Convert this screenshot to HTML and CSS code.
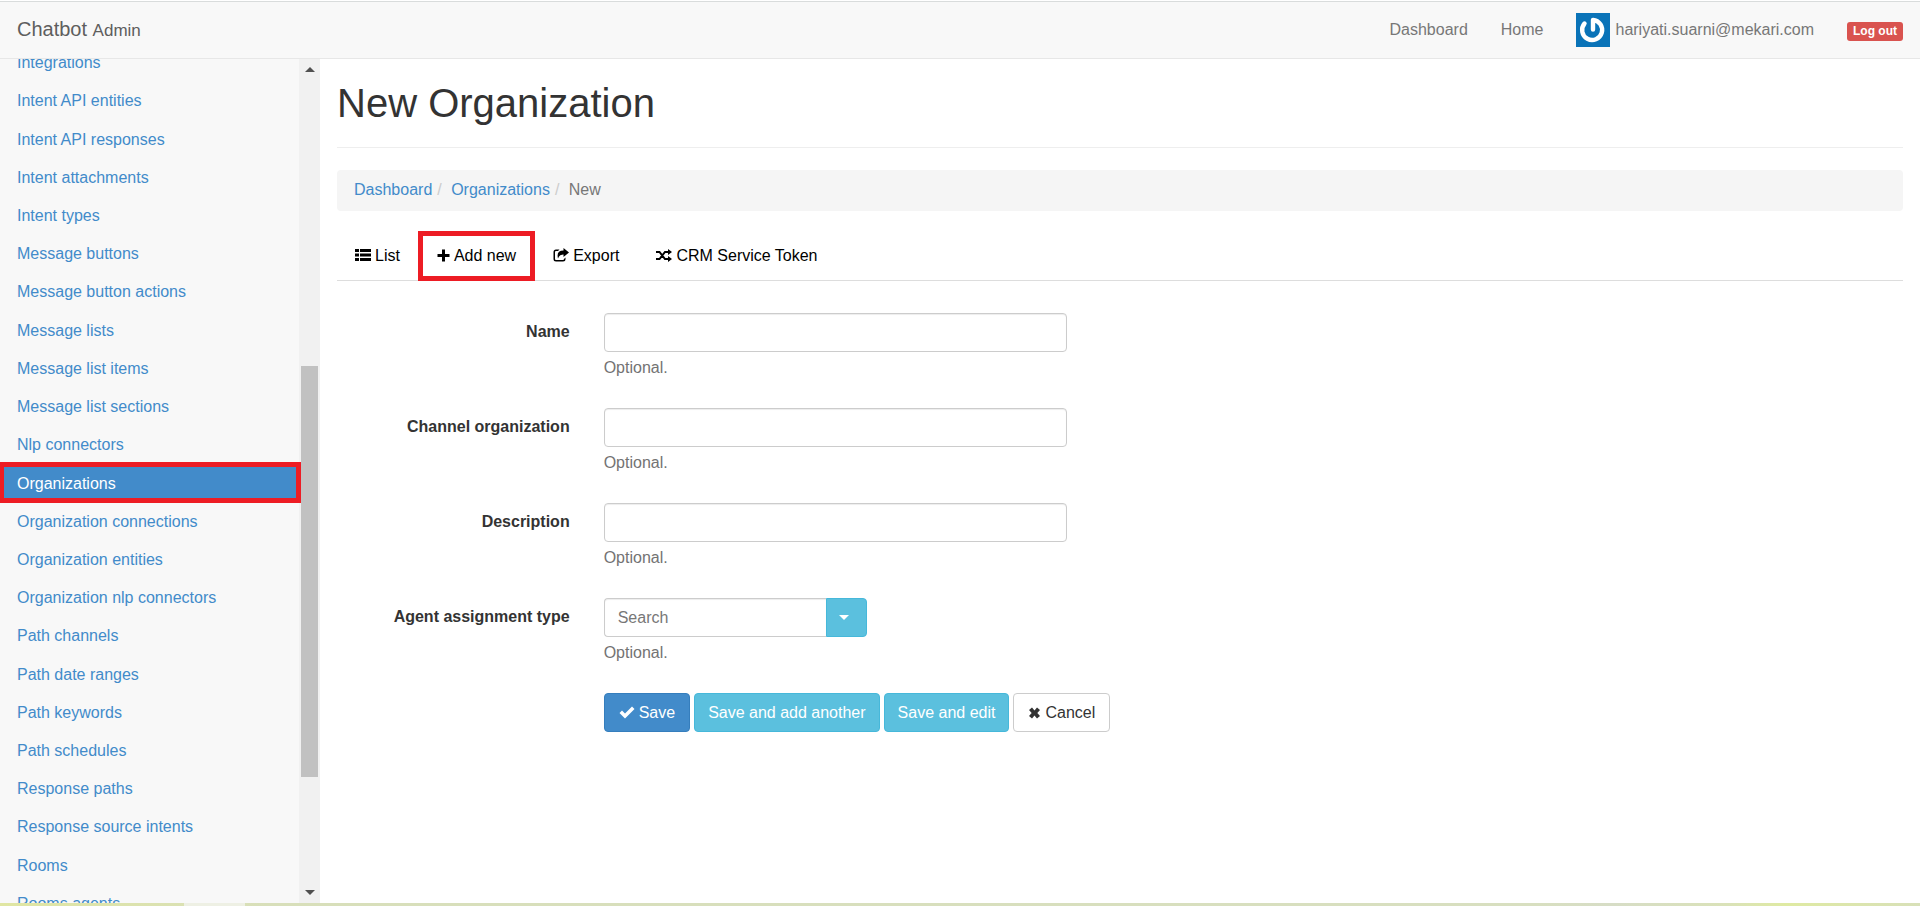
FILE: index.html
```html
<!DOCTYPE html>
<html lang="en">
<head>
<meta charset="utf-8">
<title>New Organization | Chatbot Admin</title>
<link rel="stylesheet" href="styles.css">
</head>
<body>
<header class="navbar">
  <a class="brand" href="#">Chatbot <small>Admin</small></a>
  <nav class="nav-links">
    <a href="#">Dashboard</a>
    <a href="#">Home</a>
    <a class="user" href="#">
      <svg class="avatar" viewBox="0 0 34 34" aria-hidden="true"><rect width="34" height="34" fill="#0a73b8"/><path d="M8.500 10.500A10 10 0 1 0 17 7v9.500" fill="none" stroke="#fff" stroke-width="4.400" stroke-linecap="round" stroke-linejoin="round"/></svg>
      <span>hariyati.suarni@mekari.com</span>
    </a>
    <a href="#"><span class="badge">Log out</span></a>
  </nav>
</header>
<div class="page">
  <aside class="sidebar">
    <ul class="menu">
      <li><a href="#">Integrations</a></li>
      <li><a href="#">Intent API entities</a></li>
      <li><a href="#">Intent API responses</a></li>
      <li><a href="#">Intent attachments</a></li>
      <li><a href="#">Intent types</a></li>
      <li><a href="#">Message buttons</a></li>
      <li><a href="#">Message button actions</a></li>
      <li><a href="#">Message lists</a></li>
      <li><a href="#">Message list items</a></li>
      <li><a href="#">Message list sections</a></li>
      <li><a href="#">Nlp connectors</a></li>
      <li class="active"><a href="#">Organizations</a></li>
      <li><a href="#">Organization connections</a></li>
      <li><a href="#">Organization entities</a></li>
      <li><a href="#">Organization nlp connectors</a></li>
      <li><a href="#">Path channels</a></li>
      <li><a href="#">Path date ranges</a></li>
      <li><a href="#">Path keywords</a></li>
      <li><a href="#">Path schedules</a></li>
      <li><a href="#">Response paths</a></li>
      <li><a href="#">Response source intents</a></li>
      <li><a href="#">Rooms</a></li>
      <li><a href="#">Rooms agents</a></li>
    </ul>
    <div class="scrollbar" aria-hidden="true">
      <span class="arrow arrow-up"></span>
      <span class="track"><span class="thumb"></span></span>
      <span class="arrow arrow-down"></span>
    </div>
  </aside>
  <main class="content">
    <h1>New Organization</h1>
    <ol class="breadcrumb">
      <li><a href="#">Dashboard</a></li><li><a href="#">Organizations</a></li><li class="current">New</li>
    </ol>
    <nav class="tabs">
      <a href="#"><svg class="icon" viewBox="0 0 16 16"><path d="M0 1h4v3H0zM5 1h11v3H5zM0 5.500h4v3H0zM5 5.500h11v3H5zM0 10h4v3H0zM5 10h11v3H5z"/></svg>List</a>
      <a class="marked" href="#"><svg class="icon icon-narrow" viewBox="0 0 13 16"><path d="M5 1.500h3v4.500h4.500v3H8v4.500H5V9H.5V6H5z"/></svg>Add new</a>
      <a href="#"><svg class="icon" viewBox="0 0 16 16"><path d="M6.500 1.500H3Q.5 1.500 .5 4v7Q.5 13.500 3 13.500h7q2.500 0 2.500-2.500V9.500L11 11q0 1-1 1H3q-1 0-1-1V4q0-1 1-1h2z"/><path d="M10.500 0L16 4.500 10.500 9V6.500Q6.500 6.300 5 10.500 3 2.600 10.500 2.600z"/></svg>Export</a>
      <a href="#"><svg class="icon" viewBox="0 0 16 16"><path d="M0 4h3.500L9 11h4M0 11h3.500L9 4h4" fill="none" stroke="currentColor" stroke-width="2"/><path d="M12 1l4 3-4 3zM12 8l4 3-4 3z"/></svg>CRM Service Token</a>
    </nav>
    <form class="form">
      <div class="row">
        <label for="name">Name</label>
        <div class="field"><input class="control" id="name" type="text"><p class="help">Optional.</p></div>
      </div>
      <div class="row">
        <label for="channel">Channel organization</label>
        <div class="field"><input class="control" id="channel" type="text"><p class="help">Optional.</p></div>
      </div>
      <div class="row">
        <label for="description">Description</label>
        <div class="field"><input class="control" id="description" type="text"><p class="help">Optional.</p></div>
      </div>
      <div class="row">
        <label for="agent">Agent assignment type</label>
        <div class="field">
          <div class="combo"><input class="control" id="agent" type="text" placeholder="Search"><button class="btn btn-info toggle" type="button" aria-label="Show options"><span class="caret"></span></button></div>
          <p class="help">Optional.</p>
        </div>
      </div>
      <div class="row">
        <div class="actions">
          <button class="btn btn-primary" type="submit"><svg class="icon" viewBox="0 0 16 16"><path d="M.5 8L3 5.500l3 3 7-7L15.500 4 6 13.500z"/></svg>Save</button>
          <button class="btn btn-info" type="submit">Save and add another</button>
          <button class="btn btn-info" type="submit">Save and edit</button>
          <button class="btn btn-default" type="button"><svg class="icon icon-narrow" viewBox="0 0 13 16"><path d="M4 2.500l2.500 3 2.500-3L12 5 9.300 8l2.700 3-3 2.500-2.500-3-2.500 3L1 11l2.700-3L1 5z"/></svg>Cancel</button>
        </div>
      </div>
    </form>
  </main>
</div>
<div class="strip"></div>
</body>
</html>
```

FILE: styles.css
```css
* { box-sizing: border-box; }
body {
  margin: 0;
  height: 100vh;
  display: flex;
  flex-direction: column;
  overflow: hidden;
  background: #fff;
  color: #333;
  font: 16px/22px "Liberation Sans", Arial, sans-serif;
}
a { color: #428bca; text-decoration: none; }
ul, ol { margin: 0; padding: 0; list-style: none; }

/* Top bar */
.navbar {
  flex: none;
  display: flex;
  justify-content: space-between;
  align-items: center;
  margin-top: 1px;
  height: 58px;
  padding: 0 17px;
  background: #f8f8f8;
  border-top: 1px solid #d9dcdc;
  border-bottom: 1px solid #e7e7e7;
}
.brand { color: #5e5e5e; font-size: 20px; }
.brand small { font-size: 17px; }
.nav-links { display: flex; align-items: center; gap: 33px; }
.nav-links a { color: #777; }
.user { display: flex; align-items: center; gap: 5px; }
.avatar { width: 34px; height: 34px; }
.badge {
  display: block;
  margin-top: 3px;
  padding: 0 6px;
  border-radius: 3px;
  background: #d9534f;
  color: #fff;
  font-size: 12px;
  font-weight: bold;
  line-height: 19px;
}

/* Page body */
.page { flex: 1; min-height: 0; display: flex; }
.strip {
  flex: none;
  height: 3px;
  background:
    linear-gradient(#eef0e4, #eef0e4) 184px 0 / 61px 3px no-repeat,
    linear-gradient(90deg, #e0e6a2, #d8dfba 14%, #d8dfc0 80%, #d7ddc6 84%, #dae2b8 90%, #dfeaa2 93%, #d8e0b8);
}

/* Sidebar */
.sidebar { flex: none; width: 320px; display: flex; overflow: hidden; background: #f8f8f8; }
.menu { flex: 1; display: flex; flex-direction: column; margin: -15px 0 -20px; }
.menu li { position: relative; flex: 1 0 auto; display: flex; }
.menu a { flex: 1; display: flex; align-items: center; padding: 0 17px; }
.menu .active a { background: #428bca; color: #fff; }
.menu .active::after {
  content: "";
  position: absolute;
  z-index: 1;
  inset: -2px -2px 0 0;
  border: 5px solid #ed1c24;
  border-left-width: 4px;
}
.scrollbar { width: 21px; display: flex; flex-direction: column; align-items: center; padding: 8px 0; background: #f1f1f1; }
.arrow { border: 5px solid transparent; }
.arrow-up { border-top: 0; border-bottom-color: #505050; }
.arrow-down { border-bottom: 0; border-top-color: #505050; }
.track { flex: 1; display: flex; flex-direction: column; padding-top: 294px; }
.thumb { width: 17px; height: 50vh; max-height: 411px; background: #c1c1c1; }

/* Content */
.content { flex: 1; min-width: 0; padding: 22px 17px 0; }
h1 {
  margin: 0 0 22px;
  padding-bottom: 22px;
  border-bottom: 1px solid #eee;
  font-size: 40px;
  font-weight: normal;
  line-height: 44px;
}
.breadcrumb { display: flex; margin-bottom: 19px; padding: 9px 17px 10px; border-radius: 4px; background: #f5f5f5; }
.breadcrumb li + li::before { content: "/\00a0"; padding: 0 5px; color: #ccc; }
.current { color: #777; }
.tabs { display: flex; gap: 1px; border-bottom: 1px solid #ddd; }
.tabs a { position: relative; display: flex; align-items: center; gap: 4px; padding: 15px 18px 13px; color: #000; }
.marked::after { content: "";  position: absolute; inset: 1px -1px -1px; border: 5px solid #ed1c24; }
.icon { flex: none; width: 16px; height: 16px; fill: currentColor; }
.icon-narrow { width: 13px; }

/* Form */
.form { margin: 32px -17px 0; }
.row { display: grid; grid-template-columns: 1fr 5fr; min-height: 95px; }
.row label { padding: 8px 17px 0; text-align: right; font-weight: bold; }
.field { padding: 0 17px; }
.control {
  display: block;
  width: 463px;
  max-width: 100%;
  height: 39px;
  padding: 6px 13px;
  border: 1px solid #ccc;
  border-radius: 4px;
  background: #fff;
  box-shadow: inset 0 1px 1px rgba(0, 0, 0, .075);
  color: #555;
  font: inherit;
}
.control::placeholder { color: #777; opacity: 1; }
.help { margin: 5px 0 0; color: #737373; }
.actions { grid-column: 2; display: flex; align-items: flex-start; gap: 4px; padding: 0 17px; }
.btn {
  display: flex;
  align-items: center;
  gap: 4px;
  height: 39px;
  padding: 0 13px;
  border: 1px solid;
  border-radius: 4px;
  font: inherit;
}
.btn-primary { padding: 0 14px; background: #428bca; border-color: #357ebd; color: #fff; }
.btn-info { background: #5bc0de; border-color: #46b8da; color: #fff; }
.btn-default { padding: 0 14px; background: #fff; border-color: #ccc; color: #333; }
.combo { display: flex; width: 263px; }
.combo .control { flex: 1; min-width: 0; border-right: 0; border-radius: 4px 0 0 4px; }
.combo .toggle { padding: 0 17px 0 12px; border-radius: 0 4px 4px 0; }
.caret { border: 5px solid transparent; border-top-color: #fff; border-bottom: 0; }
```
